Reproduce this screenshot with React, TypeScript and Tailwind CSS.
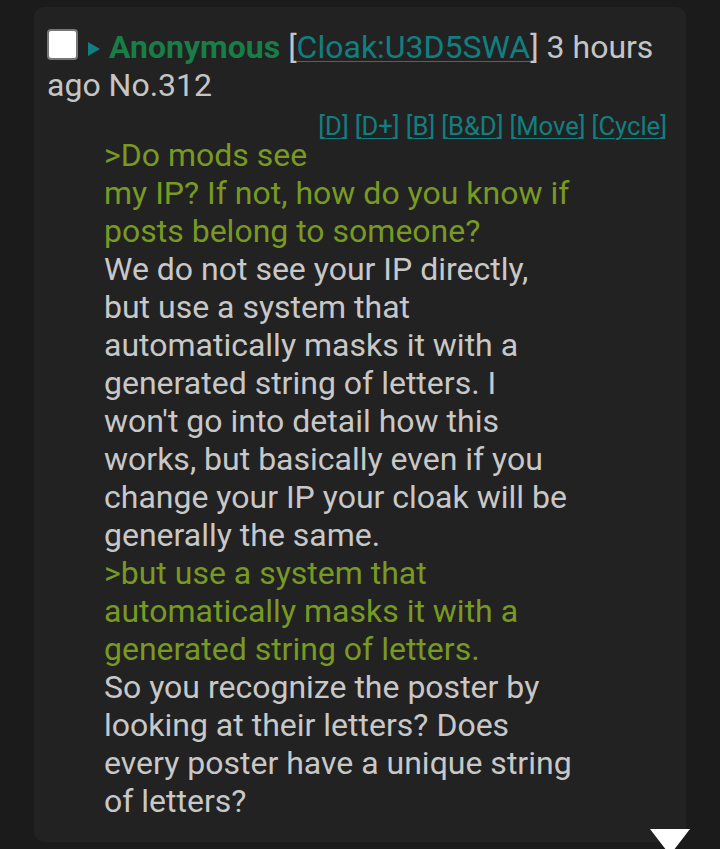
export default function App() {
  const quote = "text-[#789922]";
  const link = "text-[#117f80] underline decoration-1 underline-offset-[3px]";
  return (
    <div
      className="relative h-[849px] w-[720px] overflow-hidden bg-[#1b1b1b] pt-[7px] pl-[34px]"
      style={{ fontFamily: "Roboto, 'Noto Sans', sans-serif" }}
    >
      <div className="h-[835px] w-[652px] rounded-[10px] bg-[#222222] pt-[20px] pl-[13px] pr-[19px]">
        <div className="text-[32px] leading-[38px] text-[#c5c5c5]">
          <span className="mr-[10px] inline-block h-[31px] w-[31px] translate-y-[2px] rounded-[4px] border-2 border-[#777] bg-white align-baseline" />
          <svg
            className="mr-[9px] inline-block -translate-y-[1px] align-middle"
            width="12"
            height="14"
            viewBox="0 0 12 14"
          >
            <polygon points="0,0 12,7 0,14" fill="#117f80" />
          </svg>
          <span className="font-bold text-[#197d48]">Anonymous</span>{" "}
          <span>[</span>
          <span className={link}>Cloak:U3D5SWA</span>
          <span>]</span> 3 hours ago No.312
        </div>
        <div className="mt-[11px] flex justify-end gap-[6px] text-[25.6px] leading-[22px]">
          {["D", "D+", "B", "B&D", "Move", "Cycle"].map((t) => (
            <span key={t} className="text-[#117f80]">
              [<span className="underline decoration-1 underline-offset-[3px]">{t}</span>]
            </span>
          ))}
        </div>
        <div className="-mt-[1px] pl-[57px] text-[32px] leading-[38px] text-[#c8c8c8]">
          <div className="w-[470px]">
            <div className={quote}>
              &gt;Do mods see
              <br />
              my IP? If not, how do you know if posts belong to someone?
            </div>
            <div>
              We do not see your IP directly, but use a system that automatically masks it with a
              generated string of letters. I won't go into detail how this works, but basically
              even if you change your IP your cloak will be generally the same.
            </div>
            <div className={quote}>
              &gt;but use a system that automatically masks it with a generated string of letters.
            </div>
            <div>
              So you recognize the poster by looking at their letters? Does every poster have a
              unique string of letters?
            </div>
          </div>
        </div>
      </div>
      <svg
        className="absolute left-[650px] top-[829px]"
        width="40"
        height="26"
        viewBox="0 0 40 26"
      >
        <polygon points="0,0 40,0 20,26" fill="#ffffff" />
      </svg>
    </div>
  );
}
